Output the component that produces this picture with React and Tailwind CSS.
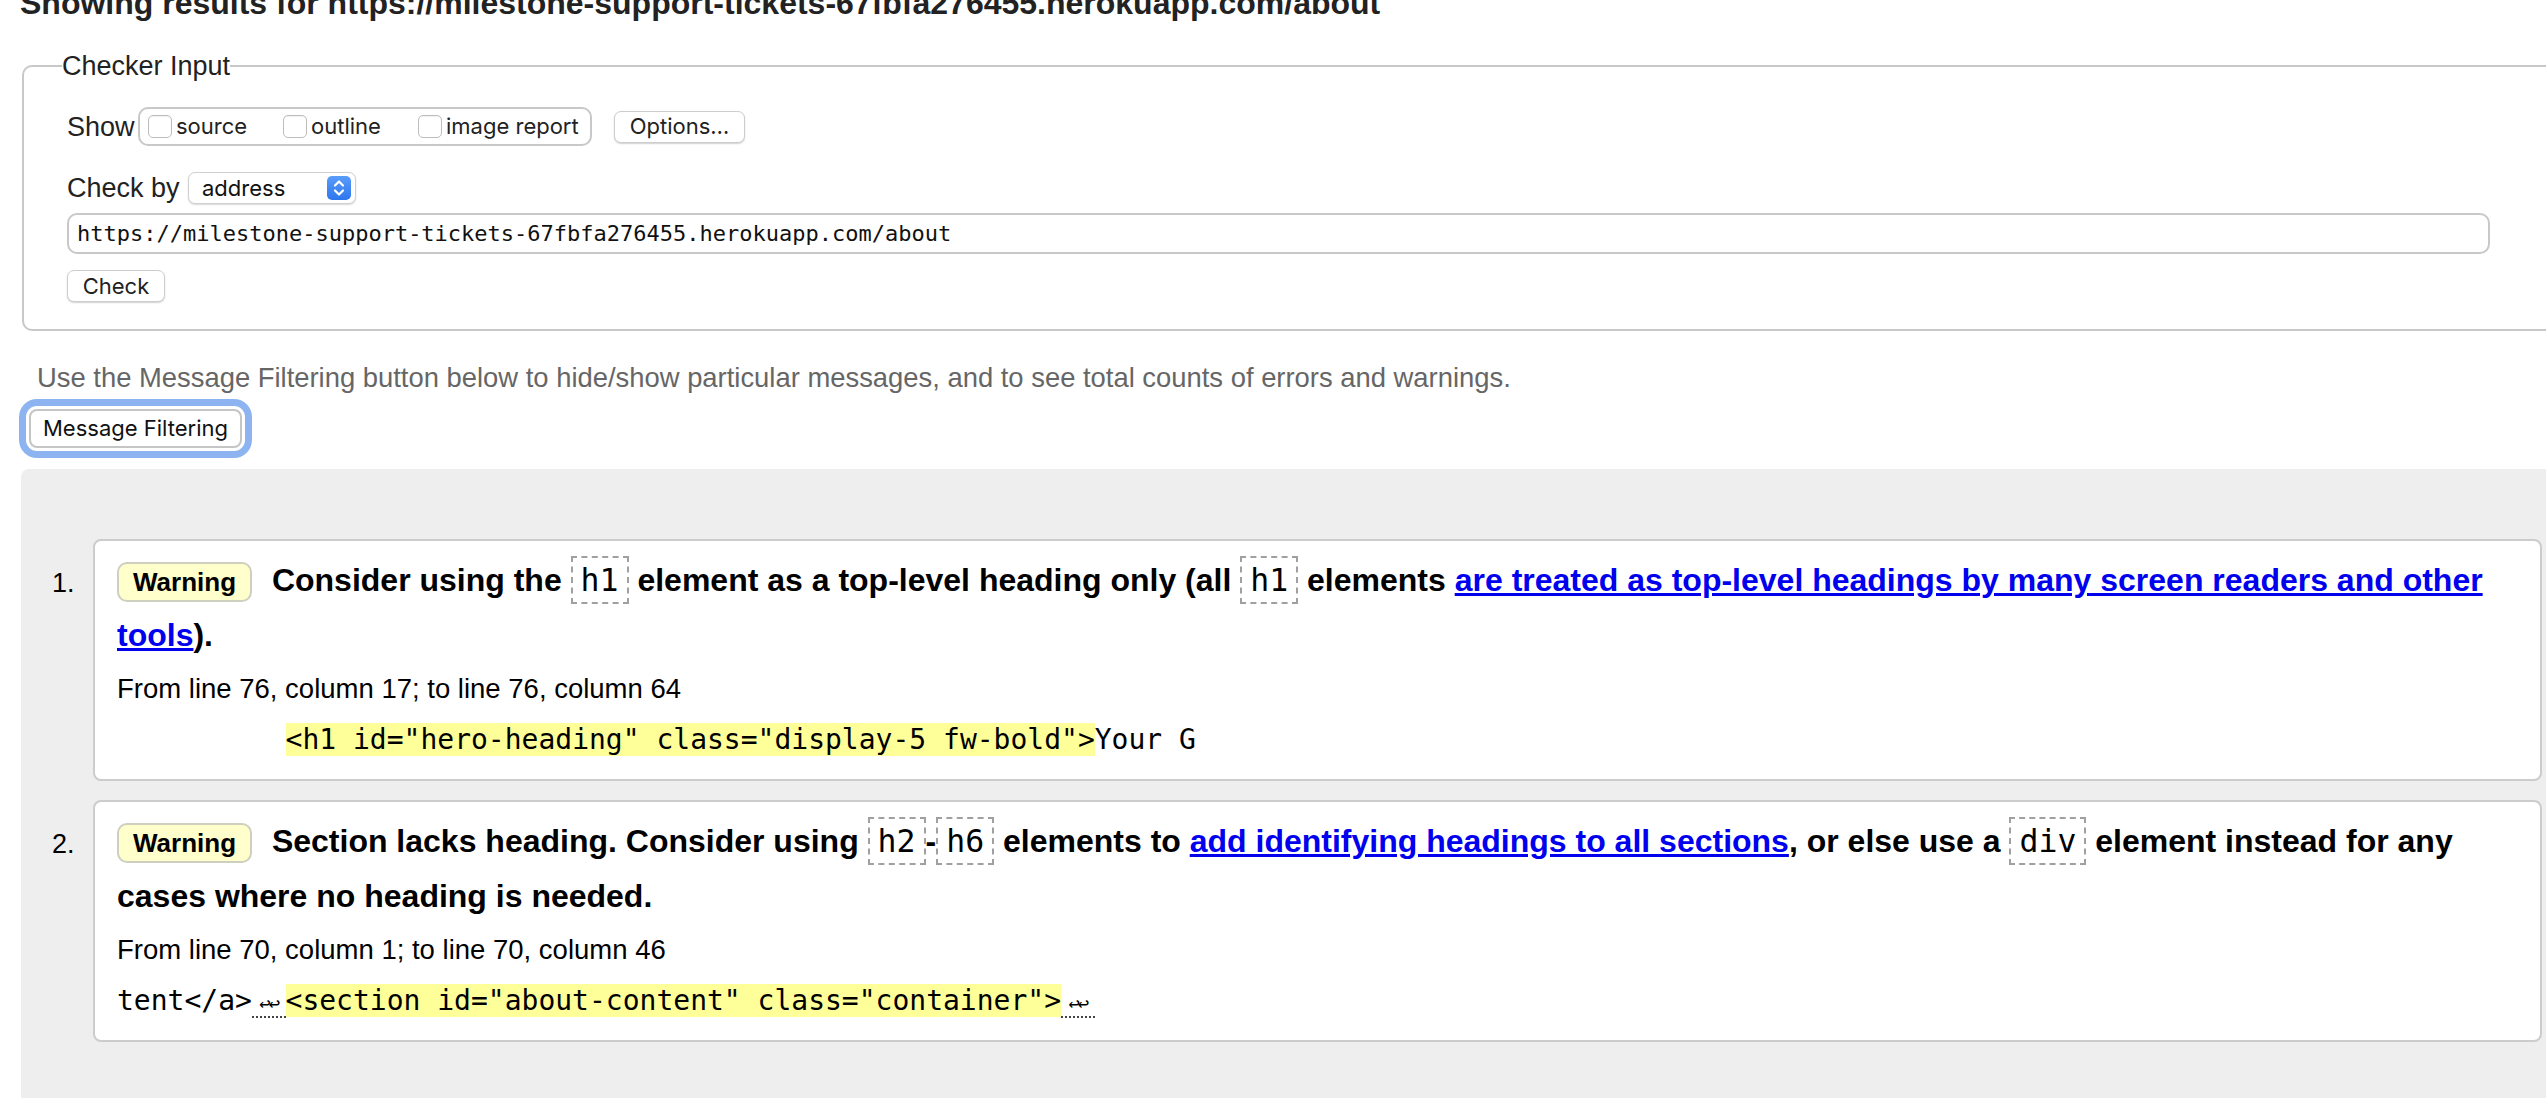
import React from 'react';

// W3C Nu checker result page (zoomed), rebuilt with tailwind

const Checkbox = () => (
    <span className="inline-block w-[24px] h-[23px] rounded-[5px] border-[1.5px] border-[#bdbdbd] bg-white shadow-[inset_0_1px_1px_rgba(0,0,0,0.06)]" />
);

const Code = ({ children }) => (
    <code className="font-['DejaVu_Sans_Mono',monospace] text-[31.5px] font-normal px-[8px] py-[4px] border-2 border-dashed border-[#a0a0a0]">
        {children}
    </code>
);

const Badge = () => (
    <span className="inline-block w-[135px] text-center text-[26px] leading-[30px] py-[3px] border-2 border-[#cfcfbf] rounded-[10px] bg-[#ffffcc] mr-[11px]">
        Warning
    </span>
);

const Returns = () => (
    <span className="inline-block w-[33.7px] text-center text-[19px] leading-none pb-[3px] border-b-2 border-dotted border-[#444] tracking-[-2px]">
        ↩↩
    </span>
);

const Message = ({ num, children, extract, from }) => (
    <li className="flex">
        <span className="w-[72px] pl-[31px] mt-[24px] text-[27px] leading-[40px]">{num}.</span>
        <div className="w-[2449px] border-2 border-[#cccccc] rounded-[8px] bg-white pt-[12px] pb-[18px] pl-[22px] pr-[20px]">
            <p className="text-[32px] leading-[55px] font-bold">
                <Badge /> {children}
            </p>
            <p className="mt-[6px] text-[27.5px] leading-[40px]">{from}</p>
            <div className="mt-[10px] font-['DejaVu_Sans_Mono',monospace] text-[28px] leading-[42px] whitespace-pre">
                {extract}
            </div>
        </div>
    </li>
);

const btn = 'flex items-center justify-center bg-white border border-[#cdcdcd] rounded-[7px] shadow-[0_1px_1.5px_rgba(0,0,0,0.18)] font-["Inter",sans-serif] text-[22px] text-[#222]';

export default function App() {
    return (
        <div className="w-[2546px] h-[1098px] overflow-hidden bg-white text-black font-['Liberation_Sans',Arial,sans-serif]">
            <div className="w-[2640px] pl-[20px]">
                <h2 className="mt-[-16px] text-[32px] leading-[38px] font-bold text-[#222]">
                    Showing results for https://milestone-support-tickets-67fbfa276455.herokuapp.com/about
                </h2>

                <fieldset className="mt-[24px] ml-[2px] w-[2580px] border-2 border-[#c8c8c8] rounded-[10px] pl-[43px] pt-[21px] pb-[27px]">
                    <legend className="-ml-[5px] text-[27px] leading-[40px] text-[#222]">Checker Input</legend>

                    <div className="flex items-center h-[39px]">
                        <span className="w-[71px] text-[27px] leading-[40px] text-[#222]">Show</span>
                        <div className="flex items-center w-[454px] h-[39px] pl-[8px] border-2 border-[#c8c8c8] rounded-[10px] font-['Inter',sans-serif] text-[22px] text-[#222]">
                            <label className="flex items-center w-[135px]">
                                <Checkbox />
                                <span className="ml-[4px]">source</span>
                            </label>
                            <label className="flex items-center w-[135px]">
                                <Checkbox />
                                <span className="ml-[4px]">outline</span>
                            </label>
                            <label className="flex items-center">
                                <Checkbox />
                                <span className="ml-[4px]">image report</span>
                            </label>
                        </div>
                        <button className={`${btn} ml-[22px] w-[131px] h-[32px]`}>Options…</button>
                    </div>

                    <div className="flex items-center h-[32px] mt-[26px]">
                        <span className="w-[121px] text-[27px] leading-[40px] text-[#222]">Check by</span>
                        <div className="flex items-center justify-between w-[168px] h-[32px] pl-[13px] pr-[4px] bg-white border border-[#d0d0d0] rounded-[7px] shadow-[0_1px_1.5px_rgba(0,0,0,0.15)] font-['Inter',sans-serif] text-[22px] text-[#111]">
                            <span>address</span>
                            <span className="flex items-center justify-center w-[24px] h-[24px] rounded-[5px] bg-gradient-to-b from-[#5a9cf9] to-[#2c76ee]">
                                <svg width="14" height="18" viewBox="0 0 14 18" fill="none" stroke="white" strokeWidth="2.2" strokeLinecap="round" strokeLinejoin="round">
                                    <path d="M3 6.5 L7 2.5 L11 6.5" />
                                    <path d="M3 11.5 L7 15.5 L11 11.5" />
                                </svg>
                            </span>
                        </div>
                    </div>

                    <div className="mt-[9px] w-[2423px] h-[41px] flex items-center pl-[8px] border-2 border-[#c8c8c8] rounded-[10px] font-['DejaVu_Sans_Mono',monospace] text-[22px] text-[#111]">
                        https://milestone-support-tickets-67fbfa276455.herokuapp.com/about
                    </div>

                    <button className={`${btn} mt-[16px] w-[98px] h-[32px]`}>Check</button>
                </fieldset>

                <p className="mt-[27px] ml-[17px] text-[27.4px] leading-[40px] text-[#666]">
                    Use the Message Filtering button below to hide/show particular messages, and to see total counts of errors and warnings.
                </p>

                <button className="mt-[11px] ml-[9px] w-[213px] h-[39px] flex items-center justify-center bg-white border-2 border-[#c5c5c5] rounded-[8px] shadow-[0_0_0_3px_#ffffff,0_0_0_10px_#8db4f0] font-['Inter',sans-serif] text-[22px] text-[#111]">
                    Message Filtering
                </button>

                <div className="mt-[21px] ml-[1px] w-[2600px] h-[700px] bg-[#eeeeee] rounded-tl-[8px] pt-[70px]">
                    <ol className="flex flex-col gap-[19px]">
                        <Message
                            num={1}
                            from="From line 76, column 17; to line 76, column 64"
                            extract={
                                <>
                                    {'          '}
                                    <span className="bg-[#ffff99]">&lt;h1 id="hero-heading" class="display-5 fw-bold"&gt;</span>
                                    Your G
                                </>
                            }
                        >
                            Consider using the <Code>h1</Code> element as a top-level heading only (all <Code>h1</Code> elements{' '}
                            <a className="text-[#0000ee] underline">
                                are treated as top-level headings by many screen readers and other tools
                            </a>
                            ).
                        </Message>
                        <Message
                            num={2}
                            from="From line 70, column 1; to line 70, column 46"
                            extract={
                                <>
                                    tent&lt;/a&gt;
                                    <Returns />
                                    <span className="bg-[#ffff99]">&lt;section id="about-content" class="container"&gt;</span>
                                    <Returns />
                                </>
                            }
                        >
                            Section lacks heading. Consider using <Code>h2</Code>-<Code>h6</Code> elements to{' '}
                            <a className="text-[#0000ee] underline">add identifying headings to all sections</a>, or else use a{' '}
                            <Code>div</Code> element instead for any cases where no heading is needed.
                        </Message>
                    </ol>
                </div>
            </div>
        </div>
    );
}
